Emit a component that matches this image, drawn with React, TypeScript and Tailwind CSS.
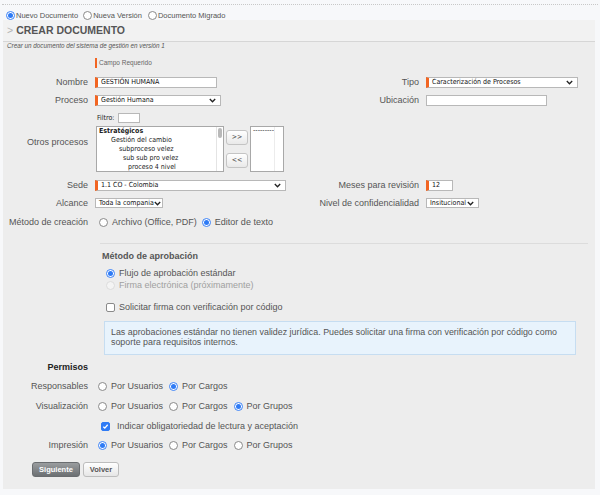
import React from "react";

const font = { fontFamily: '"Liberation Sans", Arial, sans-serif' };
const inputFont = { fontFamily: '"DejaVu Sans Condensed", "DejaVu Sans", sans-serif' };

function Radio({ checked, disabled }: { checked?: boolean; disabled?: boolean }) {
    return (
        <span
            className={`inline-flex items-center justify-center w-[9px] h-[9px] rounded-full border shrink-0 ${
                checked ? "border-[#3b82f6] bg-white" : disabled ? "border-[#dcdcdc] bg-[#f4f4f4]" : "border-[#8a8a8a] bg-white"
            }`}
        >
            {checked && <span className="w-[5px] h-[5px] rounded-full bg-[#2f7bf5]" />}
        </span>
    );
}

function Check({ checked }: { checked?: boolean }) {
    return (
        <span
            className={`inline-flex items-center justify-center w-[9px] h-[9px] rounded-[2px] border shrink-0 ${
                checked ? "bg-[#2f7bf5] border-[#2f7bf5]" : "bg-white border-[#8a8a8a]"
            }`}
        >
            {checked && (
                <svg width="7" height="7" viewBox="0 0 8 8">
                    <path d="M1.5 4.2 L3.2 5.8 L6.5 2" stroke="white" strokeWidth="1.5" fill="none" />
                </svg>
            )}
        </span>
    );
}

function Chevron() {
    return (
        <svg width="7" height="5" viewBox="0 0 7 5" className="shrink-0">
            <path d="M0.8 1 L3.5 3.8 L6.2 1" stroke="#222" strokeWidth="1.3" fill="none" />
        </svg>
    );
}

function Select({ value, w, h = "h-[11px]", required }: { value: string; w: string; h?: string; required?: boolean }) {
    return (
        <div
            className={`${w} ${h} bg-white border border-[#b8b8b8] flex items-center justify-between pl-[3px] pr-[4px] text-[7px] text-[#111] whitespace-nowrap overflow-hidden ${
                required ? "border-l-[3px] border-l-[#f26522]" : ""
            }`}
            style={inputFont}
        >
            <span className="leading-none">{value}</span>
            <Chevron />
        </div>
    );
}

function TextInput({ value, w, required }: { value?: string; w: string; required?: boolean }) {
    return (
        <div
            className={`${w} h-[11px] bg-white border border-[#b8b8b8] flex items-center pl-[3px] text-[7px] text-[#111] whitespace-nowrap ${
                required ? "border-l-[3px] border-l-[#f26522]" : ""
            }`}
            style={inputFont}
        >
            <span className="leading-none">{value}</span>
        </div>
    );
}

function Label({ children, w = "w-[92px]" }: { children: React.ReactNode; w?: string }) {
    return (
        <div className={`${w} shrink-0 text-right pr-[7px] text-[9px] leading-none text-[#555] whitespace-nowrap`}>
            {children}
        </div>
    );
}

function Opt({ label, checked, disabled }: { label: string; checked?: boolean; disabled?: boolean }) {
    return (
        <span className={`inline-flex items-center gap-[4px] whitespace-nowrap ${disabled ? "text-[#a0a0a0]" : "text-[#555]"}`}>
            <Radio checked={checked} disabled={disabled} />
            {label}
        </span>
    );
}

export default function App() {
    return (
        <div className="w-[600px] h-[495px] bg-[#f7f8fa] overflow-hidden" style={font}>
            <div className="mx-[2px] pt-[4px] border-b border-dotted border-[#c8c8c8]" />
            <div className="flex items-center h-[15px] pt-[6px] pl-[6px] text-[7.5px] text-[#555] leading-none">
                <span className="inline-flex items-center gap-[1px]">
                    <Radio checked />
                    Nuevo Documento
                </span>
                <span className="inline-flex items-center gap-[1px] ml-[5px]">
                    <Radio />
                    Nueva Versión
                </span>
                <span className="inline-flex items-center gap-[1px] ml-[6px]">
                    <Radio />
                    Documento Migrado
                </span>
            </div>

            <div className="ml-[3px] w-[592px] h-[469px] bg-[#ededed]">
                <div className="h-[22px] bg-[#f2f2f2] border-b border-[#d6d6d6] flex items-center pl-[4px] gap-[3px] leading-none">
                    <span className="text-[10.5px] text-[#b5b5b5]">&gt;</span>
                    <span className="text-[10.5px] font-bold text-[#555]">CREAR DOCUMENTO</span>
                </div>
                <div className="pl-[4px] h-[8px] leading-[8px] text-[6.3px] italic text-[#555]">
                    Crear un documento del sistema de gestión en versión 1
                </div>

                <div className="pl-[92px] mt-[8px] flex items-center h-[10px]">
                    <span className="w-[2px] h-[10px] bg-[#f26522] mr-[2px]" />
                    <span className="text-[6.5px] text-[#666] leading-none">Campo Requerido</span>
                </div>

                {/* Nombre / Tipo */}
                <div className="flex items-center mt-[5px] h-[18px]">
                    <Label>Nombre</Label>
                    <div className="w-[205px] shrink-0">
                        <TextInput value="GESTIÓN HUMANA" w="w-[122px]" required />
                    </div>
                    <Label w="w-[126px]">Tipo</Label>
                    <Select value="Caracterización de Procesos" w="w-[152px]" required />
                </div>

                {/* Proceso / Ubicación */}
                <div className="flex items-center h-[18px]">
                    <Label>Proceso</Label>
                    <div className="w-[205px] shrink-0">
                        <Select value="Gestión Humana" w="w-[126px]" required />
                    </div>
                    <Label w="w-[126px]">Ubicación</Label>
                    <TextInput w="w-[121px]" />
                </div>

                {/* Otros procesos */}
                <div className="flex items-center mt-[3px]">
                    <Label>Otros procesos</Label>
                    <div className="flex flex-col">
                        <div className="flex items-center gap-[3px] pl-[2px] h-[12px]">
                            <span className="text-[7px] text-[#222] leading-none" style={inputFont}>
                                Filtro:
                            </span>
                            <div className="w-[22px] h-[10px] bg-white border border-[#b8b8b8]" />
                        </div>
                        <div className="flex items-center mt-[2px] pl-[1px]">
                            <div
                                className="relative w-[128px] h-[46px] bg-white border border-[#a8a8a8] text-[7px] text-[#222] leading-[9px] pl-[2px] whitespace-nowrap overflow-hidden"
                                style={inputFont}
                            >
                                <div className="font-bold">Estratégicos</div>
                                <div className="pl-[12px]">Gestión del cambio</div>
                                <div className="pl-[20px]">subproceso velez</div>
                                <div className="pl-[24px]">sub sub pro velez</div>
                                <div className="pl-[29px]">proceso 4 nivel</div>
                                <div className="absolute right-0 top-0 w-[7px] h-full border-l border-[#e4e4e4] bg-white">
                                    <div className="mt-[1px] mx-auto w-[4px] h-[10px] rounded-full bg-[#b9b9b9]" />
                                </div>
                            </div>
                            <div className="flex flex-col gap-[8px] ml-[2px]">
                                <button
                                    className="w-[22px] h-[15px] rounded-[3px] border border-[#c4c4c4] bg-gradient-to-b from-white to-[#e9e9e9] text-[7px] text-[#444] leading-none"
                                    style={inputFont}
                                >
                                    &gt;&gt;
                                </button>
                                <button
                                    className="w-[22px] h-[15px] rounded-[3px] border border-[#c4c4c4] bg-gradient-to-b from-white to-[#e9e9e9] text-[7px] text-[#444] leading-none"
                                    style={inputFont}
                                >
                                    &lt;&lt;
                                </button>
                            </div>
                            <div className="relative ml-[2px] w-[34px] h-[46px] bg-white border border-[#a8a8a8] text-[7px] text-[#333] pl-[2px] leading-[6px] overflow-hidden">
                                ---------
                                <div className="absolute right-0 top-0 w-[9px] h-full border-l border-[#ececec]" />
                            </div>
                        </div>
                    </div>
                </div>

                {/* Sede / Meses */}
                <div className="flex items-center mt-[4px] h-[18px]">
                    <Label>Sede</Label>
                    <div className="w-[205px] shrink-0">
                        <Select value="1.1 CO - Colombia" w="w-[191px]" required />
                    </div>
                    <Label w="w-[126px]">Meses para revisión</Label>
                    <TextInput value="12" w="w-[27px]" required />
                </div>

                {/* Alcance / Nivel */}
                <div className="flex items-center h-[18px]">
                    <Label>Alcance</Label>
                    <div className="w-[205px] shrink-0">
                        <Select value="Toda la compania" w="w-[68px]" h="h-[10px]" />
                    </div>
                    <Label w="w-[126px]">Nivel de confidencialidad</Label>
                    <Select value="Insitucional" w="w-[53px]" h="h-[10px]" />
                </div>

                {/* Método de creación */}
                <div className="flex items-center mt-[1px] h-[18px]">
                    <Label>Método de creación</Label>
                    <div className="flex items-center gap-[5px] text-[9px] leading-none pl-[4px]">
                        <Opt label="Archivo (Office, PDF)" />
                        <Opt label="Editor de texto" checked />
                    </div>
                </div>

                <div className="ml-[97px] mr-[7px] mt-[12px] border-t border-[#dcdcdc]" />

                <div className="ml-[99px] mt-[6px] h-[12px] flex items-center text-[9px] leading-none font-bold text-[#555]">
                    Método de aprobación
                </div>
                <div className="ml-[103px] mt-[5px] flex flex-col text-[9px] leading-none">
                    <div className="h-[12px] flex items-center">
                        <Opt label="Flujo de aprobación estándar" checked />
                    </div>
                    <div className="h-[12px] flex items-center">
                        <Opt label="Firma electrónica (próximamente)" disabled />
                    </div>
                </div>
                <div className="ml-[103px] mt-[10px] h-[12px] flex items-center gap-[4px] text-[9px] leading-none text-[#555]">
                    <Check />
                    Solicitar firma con verificación por código
                </div>
                <div className="ml-[101px] w-[472px] mt-[8px] h-[34px] bg-[#e8f3fc] border border-[#c6ddf1] pl-[6px] pt-[5px] text-[8.9px] leading-[10px] text-[#555]">
                    Las aprobaciones estándar no tienen validez jurídica. Puedes solicitar una firma con verificación por código como soporte para requisitos internos.
                </div>

                {/* Permisos */}
                <div className="w-[85px] mt-[6px] h-[12px] flex items-center justify-end text-[9px] leading-none font-bold text-[#222]">
                    Permisos
                </div>

                <div className="flex items-center mt-[4px] h-[18px]">
                    <Label>Responsables</Label>
                    <div className="flex items-center gap-[6px] text-[9px] leading-none pl-[3px]">
                        <Opt label="Por Usuarios" />
                        <Opt label="Por Cargos" checked />
                    </div>
                </div>
                <div className="flex items-center mt-[2px] h-[18px]">
                    <Label>Visualización</Label>
                    <div className="flex items-center gap-[6px] text-[9px] leading-none pl-[3px]">
                        <Opt label="Por Usuarios" />
                        <Opt label="Por Cargos" />
                        <Opt label="Por Grupos" checked />
                    </div>
                </div>
                <div className="flex items-center mt-[2px] h-[18px] pl-[98px] gap-[7px] text-[9px] leading-none text-[#555]">
                    <Check checked />
                    Indicar obligatoriedad de lectura y aceptación
                </div>
                <div className="flex items-center mt-[1px] h-[18px]">
                    <Label>Impresión</Label>
                    <div className="flex items-center gap-[6px] text-[9px] leading-none pl-[3px]">
                        <Opt label="Por Usuarios" checked />
                        <Opt label="Por Cargos" />
                        <Opt label="Por Grupos" />
                    </div>
                </div>

                <div className="flex items-center gap-[3px] ml-[29px] mt-[8px]">
                    <button className="w-[48px] h-[15px] rounded-[3px] bg-gradient-to-b from-[#9a9d9f] to-[#6c7073] border border-[#6a6d70] text-[7.5px] font-bold text-white leading-none">
                        Siguiente
                    </button>
                    <button className="w-[36px] h-[15px] rounded-[3px] bg-gradient-to-b from-white to-[#e6e6e6] border border-[#bdbdbd] text-[7.5px] font-bold text-[#555] leading-none">
                        Volver
                    </button>
                </div>
            </div>
        </div>
    );
}
